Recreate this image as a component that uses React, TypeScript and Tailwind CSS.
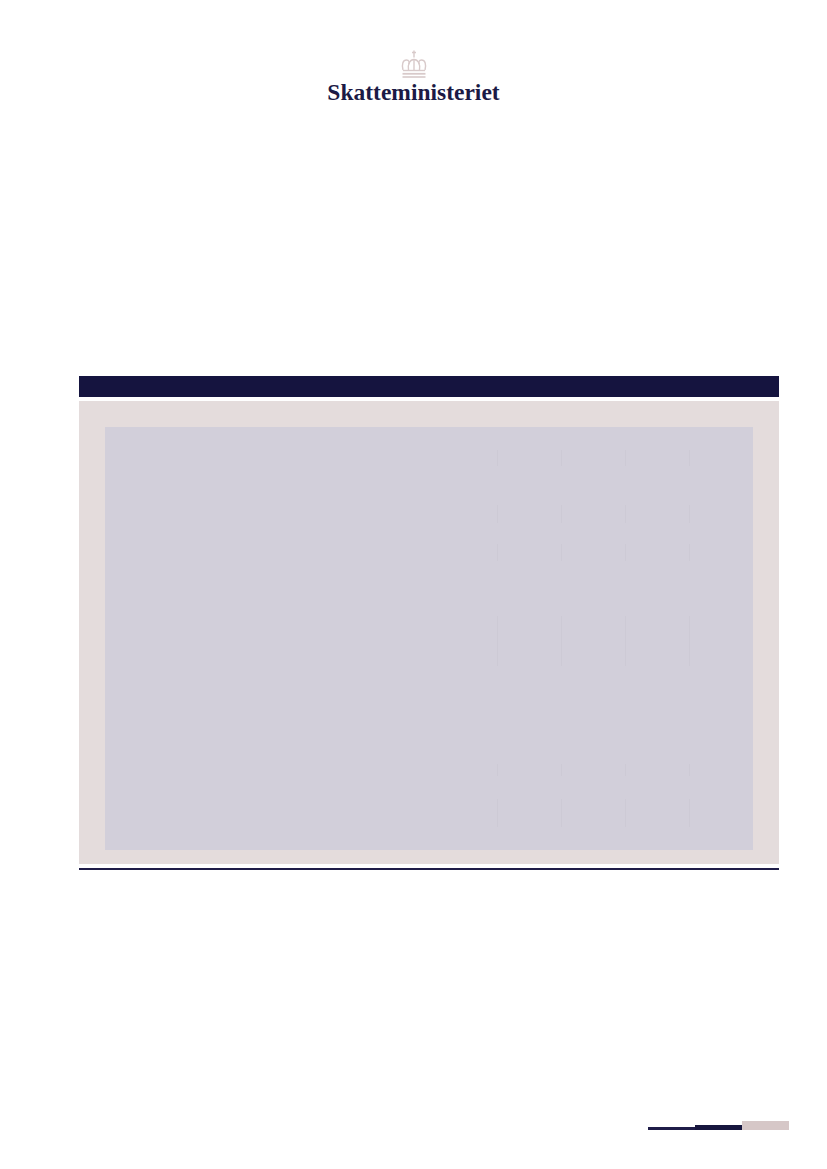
import React from "react";

const rows = [
  { h: "h-[23px]", line: false },
  { h: "h-[16px]", line: true },
  { h: "h-[39px]", line: false },
  { h: "h-[18px]", line: true },
  { h: "h-[21px]", line: false },
  { h: "h-[17px]", line: true },
  { h: "h-[55px]", line: false },
  { h: "h-[50px]", line: true },
  { h: "h-[98px]", line: false },
  { h: "h-[12px]", line: true },
  { h: "h-[23px]", line: false },
  { h: "h-[28px]", line: true },
  { h: "h-[23px]", line: false },
];

const Crown = () => (
  <svg width="26" height="28" viewBox="0 0 26 28" fill="none" stroke="#d8caca" strokeWidth="1.4">
    {/* cross */}
    <path d="M13 0.5v7M11 2.5h4" />
    {/* arches */}
    <path d="M2 20 C0.5 14 2 10 5.5 10 C8 10 9 12.5 7.5 14" />
    <path d="M24 20 C25.5 14 24 10 20.5 10 C18 10 17 12.5 18.5 14" />
    <path d="M7.5 20 C6.5 14 9 9.5 13 9.5 C17 9.5 19.5 14 18.5 20" />
    <path d="M13 9.5 V20" />
    <path d="M2 20.5 H24" />
    <path d="M1.5 23.8 H24.5" strokeWidth="1.8" />
    <path d="M1.5 27 H24.5" strokeWidth="1.6" />
  </svg>
);

export default function App() {
  return (
    <div className="w-[827px] h-[1169px] bg-white flex flex-col relative">
      {/* Logo */}
      <header className="flex flex-col items-center pt-[50px]">
        <Crown />
        <div className="mt-[1px] font-['Liberation_Serif',serif] font-bold text-[23.5px] leading-[26px] text-[#1b1a45]">
          Skatteministeriet
        </div>
      </header>

      {/* Table block */}
      <section className="ml-[79px] w-[700px] mt-[271px] flex flex-col">
        <div className="h-[21px] bg-[#15143f]" />
        <div className="mt-[4px] h-[463px] bg-[#e4dcdc] pl-[26px] pr-[26px] pt-[26px]">
          <div className="h-[423px] bg-[#d2cfda] flex flex-col">
            {rows.map((r, i) => (
              <div key={i} className={`flex ${r.h}`}>
                <div className="flex-1" />
                {[0, 1, 2, 3].map((c) => (
                  <div
                    key={c}
                    className={`w-16 ${r.line ? "border-l border-[#cdcad5]" : ""}`}
                  />
                ))}
              </div>
            ))}
          </div>
        </div>
        <div className="mt-[4px] h-[2px] bg-[#1f1d48]" />
      </section>

      {/* Page marker */}
      <footer className="absolute left-[648px] top-[1121px] flex items-end">
        <div className="w-[47px] h-[3px] bg-[#1f1d48]" />
        <div className="w-[47px] h-[5px] bg-[#17163e]" />
        <div className="w-[47px] h-[9px] bg-[#d6c7c7]" />
      </footer>
    </div>
  );
}
